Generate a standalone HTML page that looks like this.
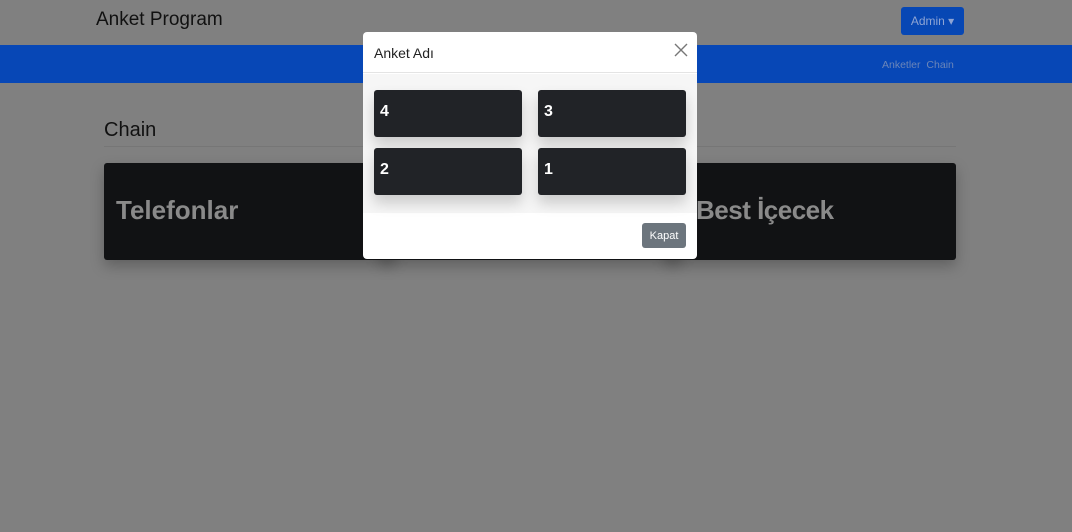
<!DOCTYPE html>
<html><head><meta charset="utf-8"><style>
*{box-sizing:border-box;margin:0;padding:0}
body{width:1072px;height:532px;overflow:hidden;background:#808080;font-family:"Liberation Sans",sans-serif;position:relative}
.brand{position:absolute;left:96px;top:9px;font-size:19px;color:#111}
.admin{position:absolute;left:901px;top:7px;width:63px;height:28px;background:#0747b4;border-radius:3px;color:#8ea4d4;font-size:12px;line-height:28px;text-align:center}
.bar{position:absolute;left:0;top:45px;width:1072px;height:38px;background:#0747b6}
.links{position:absolute;left:882px;top:59px;font-size:10.5px;color:#6c86b8;word-spacing:3px}
.h{position:absolute;left:104px;top:119px;font-size:20px;color:#111}
.hr{position:absolute;left:104px;top:146px;width:852px;height:1px;background:#767676}
.card{position:absolute;top:163px;height:97px;background:#111214;border-radius:3px;box-shadow:0 6px 14px rgba(0,0,0,.25)}
.card span{position:absolute;left:12px;top:32px;font-size:26px;font-weight:bold;color:#8a8a8a}
.modal{position:absolute;left:363px;top:32px;width:334px;height:227px;background:#fff;border-radius:4px;overflow:hidden}
.mh{height:41px;border-bottom:1px solid #e4e4e4;padding:13px 11px;font-size:14px;color:#222}
.x{position:absolute;right:9px;top:11px}
.mb{position:absolute;top:42px;left:0;width:334px;height:139px;background:#f6f6f6}
.b{position:absolute;width:148px;height:47px;background:#212327;border-radius:3px;box-shadow:0 8px 14px rgba(0,0,0,.18);color:#fff;font-weight:bold;font-size:16px;padding:13px 6px}
.kap{position:absolute;left:279px;top:191px;width:44px;height:25px;background:#6c757d;border-radius:3px;color:#fff;font-size:11px;line-height:26px;text-align:center}
</style></head><body>
<div class="brand">Anket Program</div>
<div class="admin">Admin ▾</div>
<div class="bar"></div>
<div class="links">Anketler Chain</div>
<div class="h">Chain</div>
<div class="hr"></div>
<div class="card" style="left:104px;width:290px"><span>Telefonlar</span></div>
<div class="card" style="left:380px;width:300px"></div>
<div class="card" style="left:666px;width:290px"><span style="left:30px;letter-spacing:-0.5px">Best İçecek</span></div>
<div class="modal">
<div class="mh">Anket Adı</div>
<svg class="x" width="14" height="14" viewBox="0 0 14 14"><path d="M1 1L13 13M13 1L1 13" stroke="#777" stroke-width="1.4"/></svg>
<div class="mb"></div>
<div class="b" style="left:11px;top:58px">4</div>
<div class="b" style="left:175px;top:58px">3</div>
<div class="b" style="left:11px;top:116px">2</div>
<div class="b" style="left:175px;top:116px">1</div>
<div class="kap">Kapat</div>
</div>
</body></html>
